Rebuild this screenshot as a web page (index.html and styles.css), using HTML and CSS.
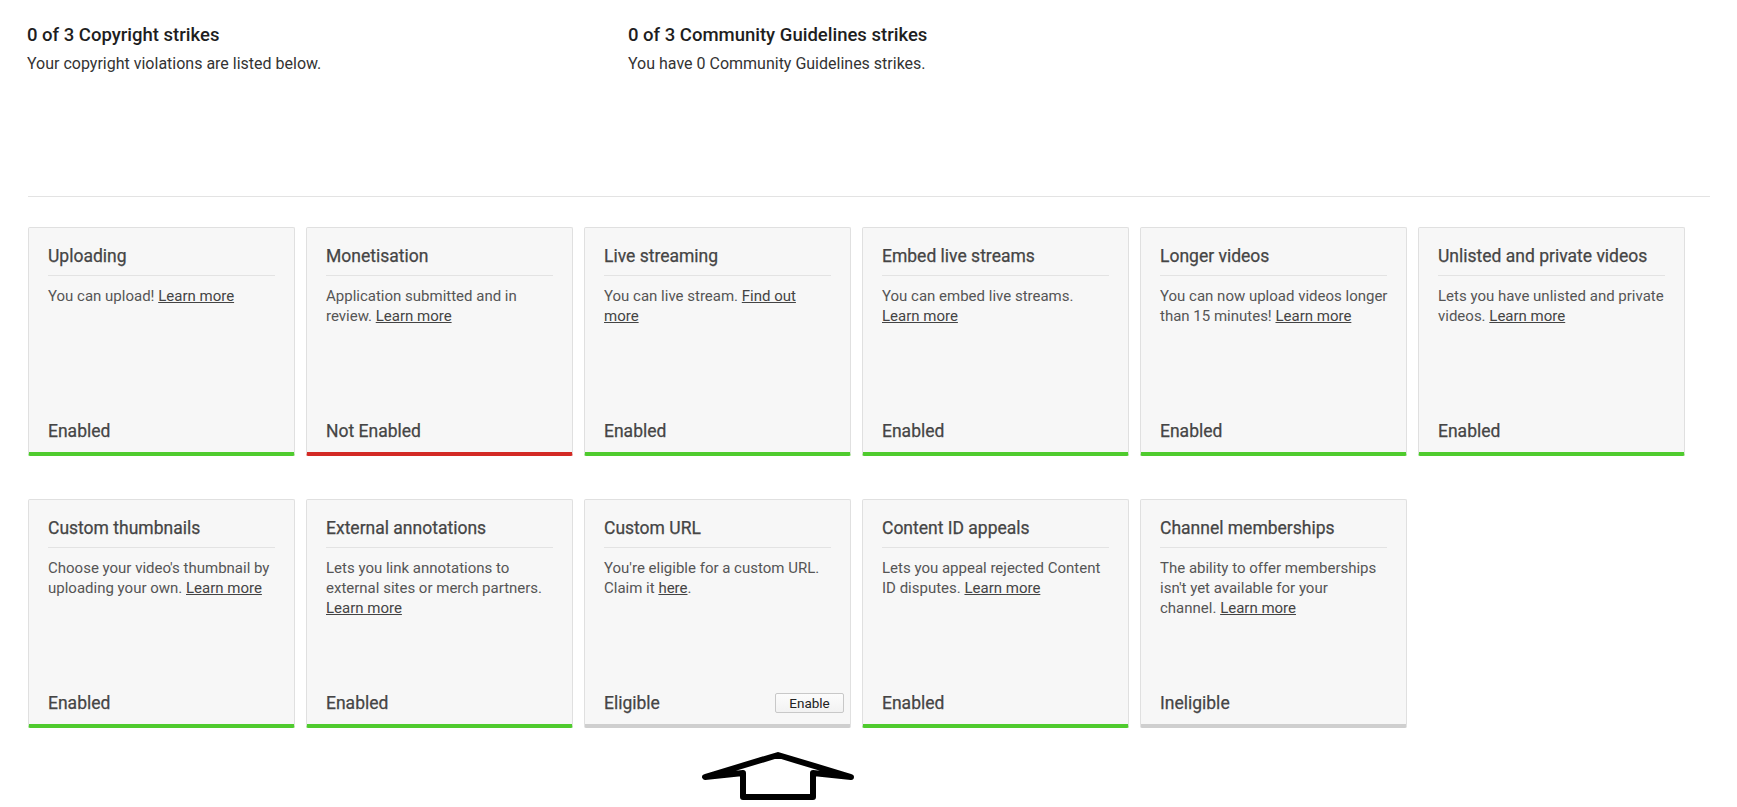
FILE: index.html
```html
<!DOCTYPE html>
<html lang="en">
<head>
<meta charset="utf-8">
<title>Channel status and features</title>
<link rel="stylesheet" href="styles.css">
</head>
<body>
<div class="page">
  <section class="strikes">
    <div class="strike">
      <h2 class="strike-title">0 of 3 Copyright strikes</h2>
      <p class="strike-text">Your copyright violations are listed below.</p>
    </div>
    <div class="strike">
      <h2 class="strike-title">0 of 3 Community Guidelines strikes</h2>
      <p class="strike-text">You have 0 Community Guidelines strikes.</p>
    </div>
  </section>

  <hr class="divider">

  <section class="features">
    <div class="card ok">
      <h3 class="card-title">Uploading</h3>
      <p class="card-desc">You can upload! <a href="#">Learn more</a></p>
      <div class="card-status"><span>Enabled</span></div>
    </div>
    <div class="card bad">
      <h3 class="card-title">Monetisation</h3>
      <p class="card-desc">Application submitted and in review. <a href="#">Learn more</a></p>
      <div class="card-status"><span>Not Enabled</span></div>
    </div>
    <div class="card ok">
      <h3 class="card-title">Live streaming</h3>
      <p class="card-desc">You can live stream. <a href="#">Find out more</a></p>
      <div class="card-status"><span>Enabled</span></div>
    </div>
    <div class="card ok">
      <h3 class="card-title">Embed live streams</h3>
      <p class="card-desc">You can embed live streams. <a href="#">Learn more</a></p>
      <div class="card-status"><span>Enabled</span></div>
    </div>
    <div class="card ok">
      <h3 class="card-title">Longer videos</h3>
      <p class="card-desc">You can now upload videos longer than 15 minutes! <a href="#">Learn more</a></p>
      <div class="card-status"><span>Enabled</span></div>
    </div>
    <div class="card ok">
      <h3 class="card-title">Unlisted and private videos</h3>
      <p class="card-desc">Lets you have unlisted and private videos. <a href="#">Learn more</a></p>
      <div class="card-status"><span>Enabled</span></div>
    </div>

    <div class="card ok">
      <h3 class="card-title">Custom thumbnails</h3>
      <p class="card-desc">Choose your video's thumbnail by uploading your own. <a href="#">Learn more</a></p>
      <div class="card-status"><span>Enabled</span></div>
    </div>
    <div class="card ok">
      <h3 class="card-title">External annotations</h3>
      <p class="card-desc">Lets you link annotations to external sites or merch partners. <a href="#">Learn more</a></p>
      <div class="card-status"><span>Enabled</span></div>
    </div>
    <div class="card neutral">
      <h3 class="card-title">Custom URL</h3>
      <p class="card-desc">You're eligible for a custom URL. Claim it <a href="#">here</a>.</p>
      <div class="card-status"><span>Eligible</span><button class="enable-btn" type="button">Enable</button></div>
    </div>
    <div class="card ok">
      <h3 class="card-title">Content ID appeals</h3>
      <p class="card-desc">Lets you appeal rejected Content ID disputes. <a href="#">Learn more</a></p>
      <div class="card-status"><span>Enabled</span></div>
    </div>
    <div class="card neutral">
      <h3 class="card-title">Channel memberships</h3>
      <p class="card-desc">The ability to offer memberships isn't yet available for your<br>channel. <a href="#">Learn more</a></p>
      <div class="card-status"><span>Ineligible</span></div>
    </div>
  </section>

  <svg class="arrow" width="160" height="56" viewBox="0 0 160 56" aria-hidden="true">
    <path d="M5 27 L43 23 L43 47 L113 47 L113 23 L151 27 L78 5 Z" fill="none" stroke="#000" stroke-width="6" stroke-linejoin="round" stroke-linecap="round"/>
  </svg>
</div>
</body>
</html>
```

FILE: styles.css
```css
html, body {
  margin: 0;
  padding: 0;
  background: #ffffff;
}

body {
  font-family: Roboto, "Noto Sans", "Liberation Sans", Arial, sans-serif;
  color: #333;
}

.page {
  position: relative;
  width: 1682px;
  padding: 0 0 0 28px;
  height: 807px;
  overflow: hidden;
}

.strikes {
  display: grid;
  grid-template-columns: 601px 601px;
  padding-top: 23px;
  margin-left: -1px;
}

.strike-title {
  margin: 0;
  font-size: 18.5px;
  font-weight: 500;
  line-height: 24px;
  color: #1e1e1e;
}

.strike-text {
  margin: 7px 0 0;
  font-size: 16px;
  line-height: 20px;
  color: #333;
}

.divider {
  margin: 122px 0 0;
  border: 0;
  border-top: 1px solid #e3e3e3;
  height: 0;
}

.features {
  display: grid;
  grid-template-columns: repeat(6, 267px);
  column-gap: 11px;
  row-gap: 43px;
  margin-top: 30px;
}

.card {
  box-sizing: border-box;
  height: 229px;
  background: #f7f7f7;
  border: 1px solid #e0e0e0;
  border-bottom: 4px solid #ccc;
  border-radius: 2px;
  display: flex;
  flex-direction: column;
  padding: 0 19px;
}

.card.ok { border-bottom-color: #4fcb2e; }
.card.bad { border-bottom-color: #d32a25; }
.card.neutral { border-bottom-color: #cfcfcf; }

.card-title {
  margin: 17px 0 0;
  padding-bottom: 8px;
  font-size: 17.5px;
  font-weight: 400;
  line-height: 22px;
  color: #454545;
  border-bottom: 1px solid #e3e3e3;
  white-space: nowrap;
  -webkit-text-stroke: 0.25px #454545;
}

.card-desc {
  margin: 10px -1px 0 0;
  font-size: 15px;
  line-height: 20px;
  color: #555;
}

.card-desc a {
  color: #444;
  text-decoration: underline;
}

.card-status {
  margin-top: auto;
  margin-bottom: 10px;
  margin-right: -13px;
  display: flex;
  align-items: center;
  justify-content: space-between;
  height: 22px;
  font-size: 17.5px;
  color: #454545;
  -webkit-text-stroke: 0.25px #454545;
}

.enable-btn {
  font-family: Roboto, "Noto Sans", "Liberation Sans", Arial, sans-serif;
  font-size: 13.5px;
  color: #222;
  -webkit-text-stroke: 0;
  background: linear-gradient(#fcfcfc, #f2f2f2);
  border: 1px solid #c8c8c8;
  border-radius: 2px;
  width: 69px;
  height: 20px;
  padding: 0;
  line-height: 18px;
}

.arrow {
  position: absolute;
  left: 700px;
  top: 750px;
}
```
